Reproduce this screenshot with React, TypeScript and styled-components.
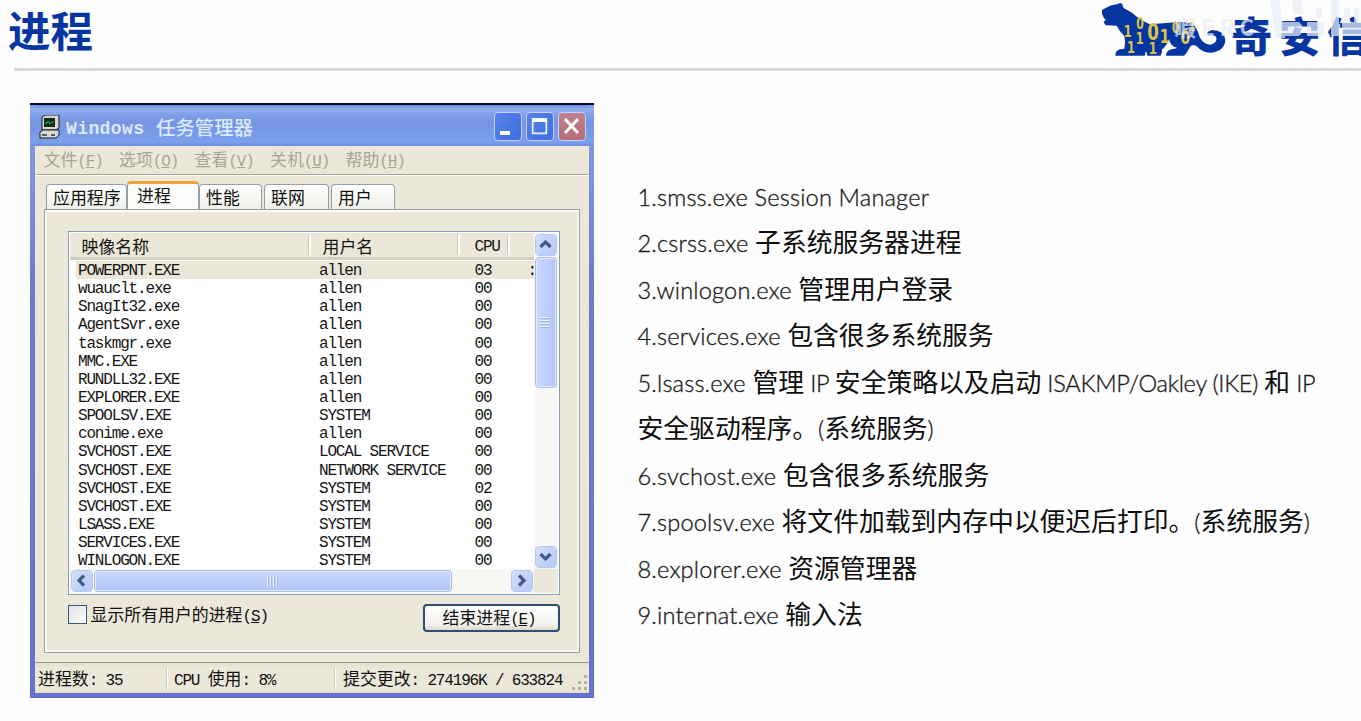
import React from 'react';
import styled, { createGlobalStyle } from 'styled-components';

const GlobalStyle = createGlobalStyle`
  * { box-sizing: border-box; }
  body { margin: 0; background: #fefefe; overflow: hidden; }
`;

const CJK = `"Noto Sans CJK SC", sans-serif`;

const Slide = styled.div`
  width: 1361px;
  height: 721px;
  display: flex;
  flex-direction: column;
  overflow: hidden;
  background: #fefefe;
`;

const SlideHeader = styled.header`
  position: relative;
  height: 71px;
  flex: none;
  display: flex;
  justify-content: space-between;
  margin-left: 14px;
  border-bottom: 3px solid #d8d8d8;
`;

const SlideTitle = styled.h1`
  margin: 0 0 0 -6px;
  font: 700 42.5px/58px ${CJK};
  color: #0535a0;
`;

const Brand = styled.div`
  width: 271px;
  height: 68px;
  display: flex;
  overflow: hidden;
`;

const TigerMark = styled.svg`
  width: 141px;
  height: 68px;
  flex: none;
`;

const BrandName = styled.span`
  font: 900 41px/68px ${CJK};
  letter-spacing: 7px;
  color: #0535a0;
  white-space: nowrap;
`;

const Watermark = styled.div`
  position: absolute;
  right: 0;
  top: 0;
  width: 190px;
  height: 56px;
  overflow: hidden;
`;

const Content = styled.main`
  display: flex;
  align-items: flex-start;
`;

const Window = styled.section`
  width: 564px;
  height: 595px;
  margin: 32px 0 0 30px;
  flex: none;
  display: flex;
  flex-direction: column;
  border-top: 2px solid #0a0d22;
  background: linear-gradient(#8d9fe6, #6c7cd6 30%, #6674cf);
  padding: 0 5px 5px;
`;

const TitleBar = styled.div`
  height: 41px;
  margin: 0 -5px;
  padding: 2px 8px 0 9px;
  display: flex;
  align-items: center;
  border-radius: 7px 7px 0 0;
  background: linear-gradient(#6f87de 0, #92b0f2 4px, #7f9fe9 10px, #7595e2 18px, #7b9de8 32px, #7ba0ec 37px, #6e8ce0);
`;

const TitleText = styled.div`
  flex: 1;
  margin-left: 5px;
  display: flex;
  align-items: center;
  color: #dbe8ff;
  height: 30px;
`;

const TitleLatin = styled.span`
  width: 90px;
  margin-top: 4px;
  font: 700 18px/30px "Liberation Mono", monospace;
  letter-spacing: 0.4px;
`;

const TitleCjk = styled.span`
  font: 500 19.4px/30px ${CJK};
`;

const Controls = styled.div`
  display: flex;
  gap: 4px;
`;

const ControlButton = styled.span<{ $close?: boolean }>`
  width: 28px;
  height: 29px;
  border: 1.5px solid #c3d2fa;
  border-radius: 4px;
  background: ${p => (p.$close ? 'linear-gradient(#c08190, #b76d78)' : 'linear-gradient(135deg, #5a83e6, #3c6be4)')};
  svg { display: block; width: 25px; height: 26px; }
`;

const Client = styled.div`
  flex: 1;
  display: flex;
  flex-direction: column;
  background: #ebe8d9;
`;

const MenuBar = styled.div`
  height: 29px;
  display: flex;
  padding-left: 8.5px;
  border-bottom: 1px solid #a9a698;
  box-shadow: 0 1px 0 #fff;
  color: #aaa593;
`;

const MenuItem = styled.span`
  width: 75.5px;
  line-height: 26px;
`;

const Cjk = styled.span`
  font: 400 16.9px/26px ${CJK};
`;

const Mono = styled.span`
  font: 400 16px/20px "Liberation Mono", monospace;
  letter-spacing: -1.17px;
  white-space: pre;
`;

const Tabs = styled.div`
  height: 34px;
  display: flex;
  align-items: flex-end;
  padding-left: 11px;
`;

const Tab = styled.div<{ $width: number; $active?: boolean; $gap?: number }>`
  width: ${p => p.$width}px;
  height: ${p => (p.$active ? 29 : 25)}px;
  margin-left: ${p => p.$gap ?? 0}px;
  margin-bottom: ${p => (p.$active ? -1 : 0)}px;
  padding-left: ${p => (p.$active ? 9 : 6)}px;
  border: 1px solid #93a0a8;
  border-top: ${p => (p.$active ? '3px solid #eca33a' : '1px solid #93a0a8')};
  border-bottom: 0;
  border-radius: 4px 4px 0 0;
  background: ${p => (p.$active ? '#fcfcfa' : 'linear-gradient(#fff, #f0f0ea)')};
  font: 400 16.9px/${p => (p.$active ? 21 : 23)}px ${CJK};
  color: #111;
`;

const Panel = styled.div`
  height: 444px;
  margin: 0 9.5px 0 8.5px;
  display: flex;
  flex-direction: column;
  padding: 21px 19px 0 23px;
  border: 1.5px solid #9ca09d;
  box-shadow: inset 2px 2px 0 #fbfaf5, inset -2px -2px 0 #f7f5ec;
`;

const ListBox = styled.div`
  height: 364px;
  flex: none;
  display: grid;
  grid-template-columns: 1fr 24px;
  grid-template-rows: 1fr 24px;
  padding: 1px;
  border: 1.5px solid #849fb9;
  background: #fff;
  overflow: hidden;
`;

const Table = styled.div`
  overflow: hidden;
  color: #151515;
`;

const ListHeader = styled.div`
  height: 27px;
  display: flex;
  background: #ebe8d9;
  border-bottom: 3px solid #d3cebd;
  margin-bottom: 1px;
  padding-top: 1px;
`;

const HeaderCell = styled.div<{ $width: number; $pad: number }>`
  width: ${p => p.$width}px;
  height: 20px;
  margin-top: 1px;
  padding-left: ${p => p.$pad}px;
  border-right: 2px solid #fff;
  box-shadow: inset -1px 0 0 #c9c5b4;
  line-height: 22px;
  ${Cjk}, ${Mono} { line-height: 22px; }
`;

const ProcessRow = styled.div<{ $selected?: boolean }>`
  height: 18.15px;
  margin-left: 6px;
  padding-left: 2.5px;
  display: grid;
  grid-template-columns: 241px 155.5px 53px 1fr;
  background: ${p => (p.$selected ? '#ebe7d8' : 'transparent')};
  ${Mono} { line-height: 21px; }
`;

const Track = styled.div<{ $horizontal?: boolean }>`
  display: flex;
  flex-direction: ${p => (p.$horizontal ? 'row' : 'column')};
  padding: 1px;
  gap: 1px;
  background: #f7f7f3;
`;

const ScrollButton = styled.span`
  width: 22px;
  height: 22px;
  flex: none;
  border: 1.5px solid #fff;
  border-radius: 4px;
  outline: 1px solid #b5c8ee;
  outline-offset: -1px;
  background: linear-gradient(135deg, #d3dffc, #b4c8f7);
  svg { display: block; width: 19px; height: 19px; }
`;

const Thumb = styled.span<{ $length: number; $horizontal?: boolean }>`
  width: ${p => (p.$horizontal ? `${p.$length}px` : '22px')};
  height: ${p => (p.$horizontal ? '22px' : `${p.$length}px`)};
  flex: none;
  display: flex;
  align-items: center;
  justify-content: center;
  border: 1px solid #a6bdeb;
  border-radius: 4px;
  box-shadow: inset 0 0 0 1px #e6edff;
  background: linear-gradient(${p => (p.$horizontal ? '180deg' : '90deg')}, #cbd9fd, #b9ccfb 70%, #aec3f5);
`;

const Grip = styled.span<{ $horizontal?: boolean }>`
  width: ${p => (p.$horizontal ? 11 : 9)}px;
  height: ${p => (p.$horizontal ? 9 : 11)}px;
  background: repeating-linear-gradient(${p => (p.$horizontal ? '90deg' : '180deg')}, #eef3ff 0 1px, #9db5ea 1px 2px, transparent 2px 3px);
`;

const Spacer = styled.span`
  flex: 1;
`;

const Corner = styled.div`
  background: #ebe8d9;
`;

const PanelFooter = styled.div`
  display: flex;
  justify-content: space-between;
  margin-top: 9px;
  color: #111;
`;

const CheckLabel = styled.label`
  display: flex;
  height: 20px;
  gap: 4px;
  line-height: 20px;
  ${Cjk}, ${Mono} { line-height: 20px; }
`;

const CheckBox = styled.span`
  width: 19px;
  height: 19px;
  margin-top: 1px;
  border: 1.5px solid #38597c;
  background: linear-gradient(135deg, #dfe2df, #fff);
`;

const EndButton = styled.div`
  width: 137px;
  height: 28px;
  padding-right: 4px;
  text-align: center;
  border: 2px solid #2e4e77;
  border-radius: 4px;
  background: linear-gradient(#fff, #f4f3ee 75%, #dcd9cc);
  line-height: 21px;
  ${Cjk}, ${Mono} { line-height: 21px; }
`;

const StatusBar = styled.div`
  height: 31px;
  margin-top: auto;
  display: flex;
  border-top: 1.5px solid #9b988b;
  background: linear-gradient(#e3e0d0, #ebe8d9 5px, #ebe8d9 26px, #e1ddcb);
  color: #111;
`;

const StatusCell = styled.div<{ $width: number; $pad: number; $last?: boolean }>`
  width: ${p => p.$width}px;
  height: 23px;
  margin-top: 4px;
  padding-left: ${p => p.$pad}px;
  overflow: hidden;
  white-space: nowrap;
  border-right: ${p => (p.$last ? 'none' : '1px solid #fff')};
  box-shadow: ${p => (p.$last ? 'none' : 'inset -1px 0 0 #cfcbb9')};
  line-height: 21px;
  ${Cjk}, ${Mono} { line-height: 21px; }
`;

const GripDots = styled.svg`
  width: 17px;
  height: 17px;
  margin: 11px 0 0 5px;
`;

const Notes = styled.div`
  margin: 102.5px 0 0 43.5px;
  color: #1c1c1c;
`;

const NoteLine = styled.p`
  margin: 0;
  height: 46.5px;
  white-space: pre;
  font: 300 23.6px/46.5px Lato, sans-serif;
  letter-spacing: 0.17px;
  -webkit-text-stroke: 0.35px #1c1c1c;
`;

const NoteCjk = styled.span`
  font: 400 25.8px/1 ${CJK};
  letter-spacing: 0;
  color: #0c0c0c;
  -webkit-text-stroke: 0;
`;

const NoteCaps = styled.span`
  letter-spacing: -0.28px;
`;

const processes: [string, string, string][] = [
  ['POWERPNT.EXE', 'allen', '03'],
  ['wuauclt.exe', 'allen', '00'],
  ['SnagIt32.exe', 'allen', '00'],
  ['AgentSvr.exe', 'allen', '00'],
  ['taskmgr.exe', 'allen', '00'],
  ['MMC.EXE', 'allen', '00'],
  ['RUNDLL32.EXE', 'allen', '00'],
  ['EXPLORER.EXE', 'allen', '00'],
  ['SPOOLSV.EXE', 'SYSTEM', '00'],
  ['conime.exe', 'allen', '00'],
  ['SVCHOST.EXE', 'LOCAL SERVICE', '00'],
  ['SVCHOST.EXE', 'NETWORK SERVICE', '00'],
  ['SVCHOST.EXE', 'SYSTEM', '02'],
  ['SVCHOST.EXE', 'SYSTEM', '00'],
  ['LSASS.EXE', 'SYSTEM', '00'],
  ['SERVICES.EXE', 'SYSTEM', '00'],
  ['WINLOGON.EXE', 'SYSTEM', '00'],
];

const menus = [['文件', 'F'], ['选项', 'O'], ['查看', 'V'], ['关机', 'U'], ['帮助', 'H']];

const notes = [
  '1.smss.exe Session Manager',
  '2.csrss.exe 子系统服务器进程',
  '3.winlogon.exe 管理用户登录',
  '4.services.exe 包含很多系统服务',
  '5.lsass.exe 管理 IP 安全策略以及启动 ISAKMP/Oakley (IKE) 和 IP',
  '安全驱动程序。(系统服务)',
  '6.svchost.exe 包含很多系统服务',
  '7.spoolsv.exe 将文件加载到内存中以便迟后打印。(系统服务)',
  '8.explorer.exe 资源管理器',
  '9.internat.exe 输入法',
];

const Note = ({ text }: { text: string }) => (
  <NoteLine>
    {text.split(/([\u3000-\u9fff]+)/).map((part, i) => {
      if (i % 2) return <NoteCjk key={i}>{part}</NoteCjk>;
      return part.includes('I') ? <NoteCaps key={i}>{part}</NoteCaps> : part;
    })}
  </NoteLine>
);

const Key = ({ k }: { k: string }) => (
  <Mono>(<u>{k}</u>)</Mono>
);

const Arrow = ({ turn }: { turn: number }) => (
  <svg viewBox="0 0 19 19">
    <path
      d="M4.5 12 L9.5 7 L14.5 12"
      transform={`rotate(${turn} 9.5 9.5)`}
      fill="none"
      stroke="#465b8b"
      strokeWidth="3.2"
    />
  </svg>
);

const digits: [string, number, number, number][] = [
  ['0', 150, 88, 46], ['1', 113, 110, 48], ['1', 149, 132, 48], ['1', 123, 158, 48],
  ['0', 189, 119, 70], ['1', 224, 130, 60], ['1', 189, 163, 50], ['0', 257, 98, 48],
  ['0', 286, 132, 58], ['1', 306, 92, 38],
];

const Tiger = () => (
  <TigerMark viewBox="0 0 423 204">
    <path
      fill="#0535a0"
      d="M36 30 L60 17 Q72 14 84 12 Q92 5 98 14 Q97 22 106 27 L126 38 Q150 60 180 73 L240 68 Q292 62 312 76 Q322 88 330 113 Q342 134 362 134 Q382 130 379 112 Q370 101 355 108 Q344 96 366 90 Q402 90 406 120 Q404 152 366 158 Q336 158 322 140 Q306 128 297 146 Q290 160 282 167 L228 167 Q228 154 240 149 L262 144 Q240 138 237 118 Q226 144 216 148 Q218 158 212 167 L172 167 L168 152 L164 167 L76 167 Q76 150 91 148 L103 146 Q108 128 103 108 Q90 96 80 77 L47 76 L41 66 L47 59 Q34 48 36 30 Z"
    />
    {digits.map(([d, x, y, size], i) => (
      <text
        key={i}
        x={x}
        y={y}
        fontSize={size}
        fontWeight="700"
        fill="#dcc247"
        textAnchor="middle"
        fontFamily="DejaVu Sans Condensed, Liberation Sans, sans-serif"
        textLength={size * 0.5}
        lengthAdjust="spacingAndGlyphs"
      >
        {d}
      </text>
    ))}
  </TigerMark>
);

const StationMark = () => (
  <Watermark>
    <svg width="190" height="56" viewBox="0 0 190 56" fill="#e9eef8">
      <g opacity="0.72">
        <text x="3" y="36" fontSize="22" fontWeight="700" letterSpacing="5" fontFamily="Noto Sans CJK SC, sans-serif">暇ERC</text>
        <path d="M99 0h9l6 38h-9zM121 0h9l2 14h-9zM160 0h8v36h-8zM173 8h6v28h-6zM183 8h5v28h-5z" />
        <path d="M106 22h22q8 7 0 14h-22zM136 22h17v14h-17zM145 8h6v10h-6zM171 22h19v14h-19z" />
      </g>
    </svg>
  </Watermark>
);

const ComputerIcon = () => (
  <svg width="22" height="24" viewBox="0 0 22 24">
    <path d="M3 2 L6 0 H20 V13 L17 15 H3Z" fill="#d8d8d4" stroke="#16181c" />
    <rect x="5" y="3" width="11" height="9" fill="#0c2b18" />
    <path d="M6 8 H8 L9 6 L11 9 L13 7 H15" stroke="#2fbd4e" fill="none" />
    <path d="M1 17 L4 15 H20 V20 L17 23 H1Z" fill="#d8d8d4" stroke="#16181c" />
    <path d="M3 20H8M12 20H16" stroke="#33363a" strokeWidth="1.5" />
  </svg>
);

export default function App() {
  return (
    <Slide>
      <GlobalStyle />
      <SlideHeader>
        <SlideTitle>进程</SlideTitle>
        <Brand>
          <Tiger />
          <BrandName>奇安信</BrandName>
        </Brand>
        <StationMark />
      </SlideHeader>
      <Content>
        <Window>
          <TitleBar>
            <ComputerIcon />
            <TitleText>
              <TitleLatin>Windows</TitleLatin>
              <TitleCjk>任务管理器</TitleCjk>
            </TitleText>
            <Controls>
              <ControlButton>
                <svg viewBox="0 0 25 26"><path d="M5 18h10v4H5z" fill="#fff" /></svg>
              </ControlButton>
              <ControlButton>
                <svg viewBox="0 0 25 26"><path d="M5 8h15M5.7 6v14.3h13.6V6z" fill="none" stroke="#e9f0ff" strokeWidth="1.8" /><path d="M5 6h15v3H5z" fill="#fff" /></svg>
              </ControlButton>
              <ControlButton $close>
                <svg viewBox="0 0 25 26"><path d="M6 6 L19 20 M19 6 L6 20" stroke="#fff" strokeWidth="3" /></svg>
              </ControlButton>
            </Controls>
          </TitleBar>
          <Client>
            <MenuBar>
              {menus.map(([name, k]) => (
                <MenuItem key={k}><Cjk>{name}</Cjk><Key k={k} /></MenuItem>
              ))}
            </MenuBar>
            <Tabs>
              <Tab $width={81}>应用程序</Tab>
              <Tab $width={72} $active>进程</Tab>
              <Tab $width={63}>性能</Tab>
              <Tab $width={65} $gap={2}>联网</Tab>
              <Tab $width={64} $gap={2}>用户</Tab>
            </Tabs>
            <Panel>
              <ListBox>
                <Table>
                  <ListHeader>
                    <HeaderCell $width={241} $pad={12}><Cjk>映像名称</Cjk></HeaderCell>
                    <HeaderCell $width={149} $pad={12}><Cjk>用户名</Cjk></HeaderCell>
                    <HeaderCell $width={50} $pad={15}><Mono>CPU</Mono></HeaderCell>
                  </ListHeader>
                  {processes.map(([name, user, cpu], i) => (
                    <ProcessRow key={i} $selected={i === 0}>
                      <Mono>{name}</Mono>
                      <Mono>{user}</Mono>
                      <Mono>{cpu}</Mono>
                      <Mono>{i === 0 ? ':' : ''}</Mono>
                    </ProcessRow>
                  ))}
                </Table>
                <Track>
                  <ScrollButton><Arrow turn={0} /></ScrollButton>
                  <Thumb $length={131}><Grip /></Thumb>
                  <Spacer />
                  <ScrollButton><Arrow turn={180} /></ScrollButton>
                </Track>
                <Track $horizontal>
                  <ScrollButton><Arrow turn={-90} /></ScrollButton>
                  <Thumb $length={358} $horizontal><Grip $horizontal /></Thumb>
                  <Spacer />
                  <ScrollButton><Arrow turn={90} /></ScrollButton>
                </Track>
                <Corner />
              </ListBox>
              <PanelFooter>
                <CheckLabel>
                  <CheckBox />
                  <span><Cjk>显示所有用户的进程</Cjk><Key k="S" /></span>
                </CheckLabel>
                <EndButton><Cjk>结束进程</Cjk><Key k="E" /></EndButton>
              </PanelFooter>
            </Panel>
            <StatusBar>
              <StatusCell $width={133} $pad={3}><Cjk>进程数</Cjk><Mono>: 35</Mono></StatusCell>
              <StatusCell $width={168} $pad={6}><Mono>CPU </Mono><Cjk>使用</Cjk><Mono>: 8%</Mono></StatusCell>
              <StatusCell $width={230} $pad={7} $last><Cjk>提交更改</Cjk><Mono>: 274196K / 633824:</Mono></StatusCell>
              <GripDots viewBox="0 0 17 17">
                {[[13, 1], [7, 7], [13, 7], [1, 13], [7, 13], [13, 13]].map(([x, y]) => (
                  <rect key={`${x}-${y}`} x={x} y={y} width="3" height="3" fill="#b7b29f" />
                ))}
              </GripDots>
            </StatusBar>
          </Client>
        </Window>
        <Notes>
          {notes.map(text => <Note key={text} text={text} />)}
        </Notes>
      </Content>
    </Slide>
  );
}
